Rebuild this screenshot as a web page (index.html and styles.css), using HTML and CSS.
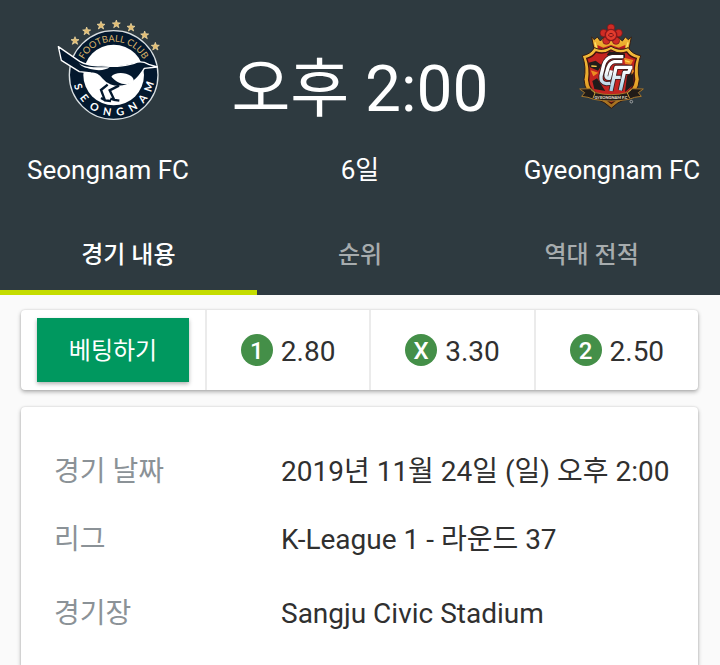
FILE: index.html
```
<!DOCTYPE html>
<html lang="ko">
<head>
  <meta charset="UTF-8">
  <meta name="viewport" content="width=device-width, initial-scale=1">
  <title>Seongnam FC - Gyeongnam FC</title>
  <link rel="stylesheet" href="styles.css">
</head>
<body>

  <header class="header">
    <div class="match">
      <div class="team">
        <svg class="crest" width="115" height="110" viewBox="0 0 345 330" aria-hidden="true">
          <defs>
            <path id="arc-top" d="M87 181 A101 101 0 0 1 289 181"/>
            <path id="star" d="M0 -12 L3 -4 L12 -3 L5 2 L8 11 L0 6 L-8 11 L-5 2 L-12 -3 L-3 -4 Z"/>
          </defs>
          <circle cx="188" cy="180" r="133" fill="#03182e" stroke="#d9dfe2" stroke-width="4"/>
          <circle cx="188" cy="180" r="91" fill="#fff"/>
          <g fill="#e3bd72" stroke="#f6dfa8" stroke-width="2">
            <use href="#star" x="72" y="77"/>
            <use href="#star" x="107" y="48"/>
            <use href="#star" x="150" y="31"/>
            <use href="#star" x="196" y="27"/>
            <use href="#star" x="240" y="37"/>
            <use href="#star" x="281" y="60"/>
            <use href="#star" x="313" y="94"/>
          </g>
          <text class="crest-top"><textPath href="#arc-top" startOffset="50%">FOOTBALL CLUB</textPath></text>
          <g class="crest-bottom">
            <text x="188" y="303" transform="rotate(72 188 180)">S</text>
            <text x="188" y="303" transform="rotate(52 188 180)">E</text>
            <text x="188" y="303" transform="rotate(31 188 180)">O</text>
            <text x="188" y="303" transform="rotate(10 188 180)">N</text>
            <text x="188" y="303" transform="rotate(-10 188 180)">G</text>
            <text x="188" y="303" transform="rotate(-31 188 180)">N</text>
            <text x="188" y="303" transform="rotate(-51 188 180)">A</text>
            <text x="188" y="303" transform="rotate(-72 188 180)">M</text>
          </g>
          <!-- magpie -->
          <path d="M22 95 L86 139 C113 156 145 151 176 154 C207 156 228 150 249 145 C266 137 282 142 293 148 L319 156 L280 160 C268 179 250 207 216 213 C189 218 165 208 153 192 C144 180 136 174 120 174 L85 170 L31 136 Z" fill="#03182e" stroke="#fff" stroke-width="4" stroke-linejoin="round"/>
          <path d="M84 145 C106 162 140 155 176 157 C165 166 140 168 118 162 C105 158 94 158 84 145 Z" fill="#fff"/>
          <path d="M181 185 C190 171 222 170 240 183 C255 195 248 207 229 207 C208 208 196 200 181 185 Z" fill="#fff"/>
          <path d="M170 209 L150 225 L162 256 L180 258 M162 256 L150 249 M204 212 L176 226 L190 255 L205 257 M190 255 L178 251" fill="none" stroke="#03182e" stroke-width="7"/>
        </svg>
        <span class="team-name">Seongnam FC</span>
      </div>

      <div class="kickoff">
        <span class="time">오후 2:00</span>
        <span class="date">6일</span>
      </div>

      <div class="team">
        <svg class="crest" width="75" height="110" viewBox="0 0 225 330" aria-hidden="true">
          <defs>
            <linearGradient id="gold" x1="0" y1="0" x2="0" y2="1">
              <stop offset="0" stop-color="#f3bd3b"/>
              <stop offset="0.6" stop-color="#e8a62a"/>
              <stop offset="1" stop-color="#97651d"/>
            </linearGradient>
            <linearGradient id="silver" gradientUnits="userSpaceOnUse" x1="0" y1="120" x2="0" y2="230">
              <stop offset="0" stop-color="#fff"/>
              <stop offset="0.4" stop-color="#fff"/>
              <stop offset="1" stop-color="#9cc6dd"/>
            </linearGradient>
          </defs>
          <!-- crown -->
          <path d="M50 66 L58 74 L67 66 L76 78 L88 66 L108 76 L129 66 L142 78 L151 66 L160 74 L169 66 L160 112 L59 112 Z" fill="url(#gold)" stroke="#351c12" stroke-width="3"/>
          <path d="M67 90 L85 98 L108 90 L131 98 L151 90 L149 104 L70 104 Z" fill="#b91820"/>
          <path d="M60 82 L66 106 M159 82 L153 106" stroke="#ffe066" stroke-width="5"/>
          <g fill="#cf2b24" stroke="#6d1517" stroke-width="2">
            <circle cx="108" cy="38" r="11"/>
            <circle cx="86" cy="54" r="11"/>
            <circle cx="131" cy="54" r="11"/>
            <circle cx="94" cy="77" r="11"/>
            <circle cx="123" cy="77" r="11"/>
          </g>
          <circle cx="108" cy="60" r="17" fill="#e23c2d" stroke="#8c171c" stroke-width="4"/>
          <path d="M100 60 Q108 50 116 60 Q108 71 100 60" fill="none" stroke="#7b1518" stroke-width="3"/>
          <!-- shield -->
          <path d="M22 122 Q47 118 58 98 Q82 110 108 94 Q134 110 160 98 Q172 118 197 122 Q185 155 193 193 Q190 236 153 252 Q127 261 109 280 Q90 261 65 252 Q29 236 27 193 Q35 157 22 122 Z" fill="url(#gold)" stroke="#321b13" stroke-width="3"/>
          <path d="M35 130 Q52 127 63 111 Q88 119 108 105 Q131 119 155 111 Q166 127 184 130 Q174 158 179 194 Q174 229 144 239 L109 265 L74 239 Q43 228 41 195 Q46 158 35 130 Z" fill="#c42420" stroke="#45130e" stroke-width="4"/>
          <path d="M41 143 L62 137 L80 151 L69 167 L45 157 Z M156 182 L176 169 V209 L150 231 Z M52 198 L66 190 L91 228 L58 222 Z M103 109 L150 116 L150 131 L95 120 Z" fill="#201c1b"/>
          <path d="M147 128 L175 135 L168 149 L177 169 L170 180 L168 150 L150 146 Z M47 166 L70 173 L55 184 Z" fill="#ed8b22"/>
          <path d="M150 137 L164 141 M49 153 L65 154" stroke="#ffd34d" stroke-width="4"/>
          <!-- monogram -->
          <g fill="none" stroke-linejoin="round">
            <path d="M145 125 H112 Q93 128 86 150 L78 183 Q76 204 94 206 L106 205 M142 140 H118 Q104 143 99 158 L93 180 Q92 191 103 190 L109 166 M172 157 H123 L108 228 M116 187 H137 M167 157 L161 172 H148 L136 226" stroke="#3b1c1c" stroke-width="15"/>
            <path d="M145 125 H112 Q93 128 86 150 L78 183 Q76 204 94 206 L106 205 M142 140 H118 Q104 143 99 158 L93 180 Q92 191 103 190 L109 166 M172 157 H123 L108 228 M116 187 H137 M167 157 L161 172 H148 L136 226" stroke="url(#silver)" stroke-width="10"/>
          </g>
          <!-- ribbon -->
          <path d="M14 222 L48 221 L62 233 Q108 245 156 233 L170 221 L205 222 L190 233 L199 244 L179 247 L162 253 Q108 263 56 253 L39 247 L20 244 L29 233 Z" fill="#211b17" stroke="#a6762b" stroke-width="3"/>
          <path d="M47 223 L60 234 L54 250 M170 223 L157 234 L164 250" fill="none" stroke="#d2a13c" stroke-width="3"/>
          <text class="crest-ribbon" x="108" y="252">GYEONGNAM F.C</text>
          <circle cx="169" cy="260" r="4" fill="none" stroke="#ccc" stroke-width="2"/>
        </svg>
        <span class="team-name">Gyeongnam FC</span>
      </div>
    </div>

    <nav class="tabs">
      <button class="tab active" type="button">경기 내용</button>
      <button class="tab" type="button">순위</button>
      <button class="tab" type="button">역대 전적</button>
    </nav>
  </header>

  <main class="content">
    <section class="card odds">
      <div class="bet">
        <button class="bet-button" type="button">베팅하기</button>
      </div>
      <div class="odd"><span class="badge">1</span><span class="value">2.80</span></div>
      <div class="odd"><span class="badge">X</span><span class="value">3.30</span></div>
      <div class="odd"><span class="badge">2</span><span class="value">2.50</span></div>
    </section>

    <section class="card details">
      <dl class="info">
        <div class="row">
          <dt>경기 날짜</dt>
          <dd>2019년 11월 24일 (일) 오후 2:00</dd>
        </div>
        <div class="row">
          <dt>리그</dt>
          <dd>K-League 1 - 라운드 37</dd>
        </div>
        <div class="row venue">
          <dt>경기장</dt>
          <dd>Sangju Civic Stadium</dd>
        </div>
      </dl>
    </section>
  </main>

</body>
</html>
```

FILE: styles.css
```
* {
  box-sizing: border-box;
}
body {
  display: flex;
  flex-direction: column;
  min-height: 100vh;
  margin: 0;
  font-family: Roboto, "Noto Sans CJK KR", sans-serif;
  font-size: 28px;
  line-height: 32px;
  color: #303030;
  background: #fafafa;
}
button {
  border: none;
  border-radius: 0;
  font-family: inherit;
  font-size: 24px;
  line-height: 32px;
  cursor: pointer;
}

/* header */
.header {
  color: #fff;
  background: #2e3a40;
}
.match {
  display: grid;
  grid-template-columns: 3fr 4fr 3fr;
  padding-top: 15px;
}
.team,
.kickoff {
  display: flex;
  flex-direction: column;
  align-items: center;
  justify-content: flex-end;
  gap: 29px;
  font-size: 26px;
  white-space: nowrap;
}
.crest {
  display: block;
}
.time {
  font-size: 64px;
  line-height: 70px;
}
.crest-top,
.crest-bottom,
.crest-ribbon {
  font-family: Lato, sans-serif;
  text-anchor: middle;
}
.crest-top {
  font-size: 28px;
  fill: #d9b36a;
}
.crest-bottom {
  font-size: 32px;
  font-weight: bold;
  fill: #fff;
}
.crest-ribbon {
  font-size: 12px;
  font-weight: bold;
  fill: #f1e8d8;
}

/* tabs */
.tabs {
  display: flex;
  margin-top: 35px;
}
.tab {
  flex: 1 1 auto;
  height: 74px;
  padding: 0 0 2px;
  border-bottom: 5px solid transparent;
  font-weight: 500;
  color: #a7acae;
  background: none;
}
.tab.active {
  border-color: #c4dc00;
  color: #fff;
}

/* cards */
.content {
  display: flex;
  flex: 1;
  flex-direction: column;
  gap: 17px;
  padding: 15px 22px 0 21px;
}
.card {
  border-radius: 4px;
  background: #fff;
  box-shadow: 0 2px 4px rgba(0, 0, 0, 0.3), 0 0 2px rgba(0, 0, 0, 0.15);
}
.odds {
  display: flex;
}
.bet {
  padding: 8px 16px;
}
.bet-button {
  width: 152px;
  height: 64px;
  padding: 2px 0 0;
  color: #fff;
  background: #00985f;
  box-shadow: 0 2px 4px rgba(0, 0, 0, 0.3);
}
.odd {
  display: flex;
  flex: 1;
  align-items: center;
  justify-content: center;
  gap: 8px;
  border-left: 2px solid #ebebeb;
}
.value {
  padding-top: 4px;
}
.badge {
  width: 32px;
  height: 32px;
  padding-top: 1px;
  border-radius: 50%;
  font-size: 24px;
  font-weight: 500;
  text-align: center;
  color: #fff;
  background: #448f48;
}
.details {
  flex: 1;
  padding: 49px 28px 36px 33px;
  border-radius: 4px 4px 0 0;
}
.info {
  display: flex;
  flex-direction: column;
  gap: 36px;
  margin: 0;
}
.row {
  display: flex;
}
.venue {
  margin-top: 6px;
}
.row dt {
  flex: none;
  width: 227px;
  color: #8b9297;
}
.row dd {
  margin: 0;
}
```
